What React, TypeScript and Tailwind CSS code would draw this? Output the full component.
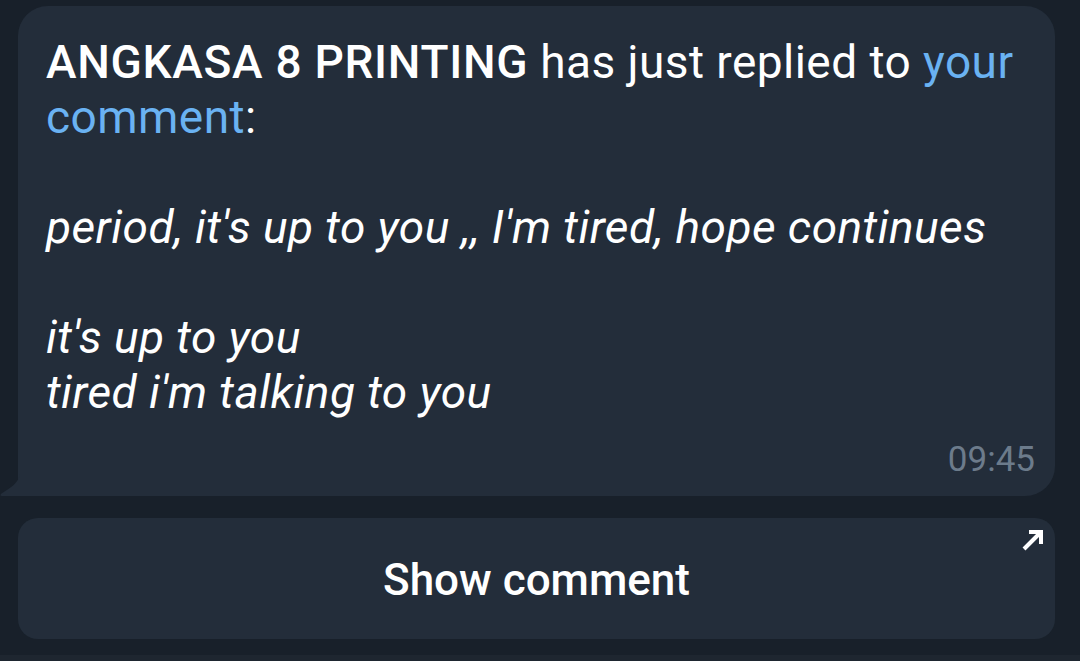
export default function App() {
  return (
    <div
      className="w-[1080px] h-[661px] bg-[#18202a] overflow-hidden flex flex-col"
      style={{ fontFamily: "Roboto, 'Noto Sans', sans-serif" }}
    >
      <div className="pt-[6px] pl-[18px] pr-[25px]">
        <div className="relative bg-[#232d3a] rounded-[30px] rounded-bl-none pl-[28px] pr-[20px] pt-[29px] pb-[16px]">
          <svg
            className="absolute left-[-18px] bottom-0"
            width="20"
            height="22"
            viewBox="0 0 20 22"
          >
            <path d="M20 0 L20 22 L2 22 C0 22 0 21 1.5 19.5 C10 14 18 10 20 0 Z" fill="#232d3a" />
          </svg>
          <div className="text-[46px] leading-[55px] text-white tracking-[0.45px]">
            <p>
              <span className="font-medium tracking-[0.7px]">ANGKASA 8 PRINTING</span> has just replied to{" "}
              <span className="text-[#6ab2f2]">your comment</span>:
            </p>
            <p className="h-[55px]"></p>
            <p className="italic">period, it's up to you ,, I'm tired, hope continues</p>
            <p className="h-[55px]"></p>
            <p className="italic">it's up to you</p>
            <p className="italic">tired i'm talking to you</p>
          </div>
          <div className="flex justify-end mt-[20px]">
            <span className="text-[35px] leading-[40px] text-[#6c7b8b]">09:45</span>
          </div>
        </div>
      </div>
      <div className="pt-[22px] pl-[18px] pr-[25px]">
        <div className="relative bg-[#232d3a] rounded-[20px] h-[121px] flex items-center justify-center">
          <span className="text-[44px] font-medium text-white pt-[2px]">Show comment</span>
          <svg
            className="absolute right-[9px] top-[9px]"
            width="26"
            height="26"
            viewBox="0 0 26 26"
            fill="none"
            stroke="white"
            strokeWidth="4"
          >
            <path d="M9 5 H21 V17" strokeLinejoin="miter" />
            <path d="M4 22 L21 5" />
          </svg>
        </div>
      </div>
      <div className="mt-auto h-[6px] bg-[#1e2630]"></div>
    </div>
  );
}
